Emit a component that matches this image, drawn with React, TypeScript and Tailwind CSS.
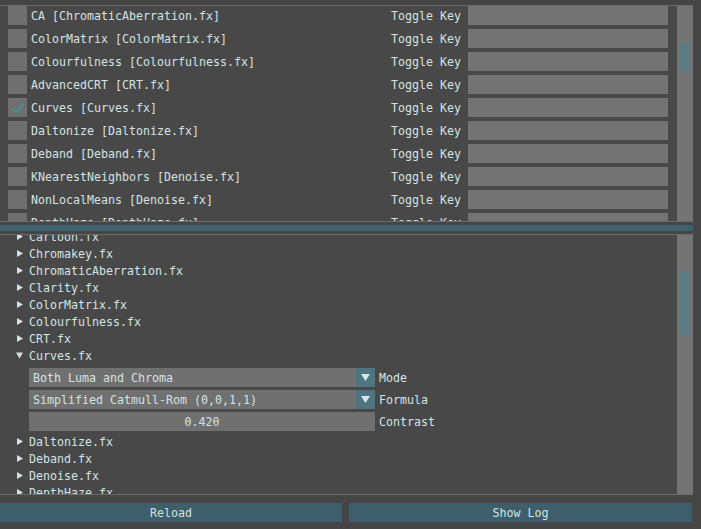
import React from 'react';

const effects = [
  { label: 'CA [ChromaticAberration.fx]' },
  { label: 'ColorMatrix [ColorMatrix.fx]' },
  { label: 'Colourfulness [Colourfulness.fx]' },
  { label: 'AdvancedCRT [CRT.fx]' },
  { label: 'Curves [Curves.fx]', on: true },
  { label: 'Daltonize [Daltonize.fx]' },
  { label: 'Deband [Deband.fx]' },
  { label: 'KNearestNeighbors [Denoise.fx]' },
  { label: 'NonLocalMeans [Denoise.fx]' },
  { label: 'DepthHaze [DepthHaze.fx]' },
];

const filesBefore = [
  'Cartoon.fx',
  'Chromakey.fx',
  'ChromaticAberration.fx',
  'Clarity.fx',
  'ColorMatrix.fx',
  'Colourfulness.fx',
  'CRT.fx',
];

const filesAfter = ['Daltonize.fx', 'Deband.fx', 'Denoise.fx', 'DepthHaze.fx'];

function Arrow({ open }: { open?: boolean }) {
  if (open) {
    return (
      <svg width="7" height="7" viewBox="0 0 7 7" className="ml-[16px] mr-[6px] shrink-0">
        <polygon points="0,0.5 7,0.5 3.5,6.5" fill="#d3e3e3" />
      </svg>
    );
  }
  return (
    <svg width="6" height="7" viewBox="0 0 6 7" className="ml-[17px] mr-[6px] shrink-0">
      <polygon points="0,0 6,3.5 0,7" fill="#d3e3e3" />
    </svg>
  );
}

function TreeItem({ name, open }: { name: string; open?: boolean }) {
  return (
    <div className="flex h-[17px] items-center">
      <Arrow open={open} />
      <span className="pt-[2px]">{name}</span>
    </div>
  );
}

function Combo({ value, label }: { value: string; label: string }) {
  return (
    <div className="flex h-[19px] items-center">
      <div className="ml-[29px] flex h-[19px] w-[346px] items-center bg-[#707070]">
        <span className="flex-1 pl-[4px] pt-[2px]">{value}</span>
        <div className="flex h-[19px] w-[19px] items-center justify-center bg-[#4f7580]">
          <svg width="9" height="7" viewBox="0 0 9 7">
            <polygon points="0,0 9,0 4.5,7" fill="#d6e6ea" />
          </svg>
        </div>
      </div>
      <span className="ml-[4px] pt-[2px]">{label}</span>
    </div>
  );
}

function Scrollbar({ top, height }: { top: number; height: number }) {
  return (
    <div className="relative w-[16px] shrink-0 bg-[#737373]">
      <div
        className="absolute left-[3px] w-[10px] bg-[#5b7b84]"
        style={{ top, height }}
      />
    </div>
  );
}

export default function App() {
  return (
    <div className="h-[529px] w-[701px] overflow-hidden bg-[#454545] pt-[5px] font-['DejaVu_Sans_Mono',monospace] text-[11.63px] leading-none text-[#d3e3e3]">
      {/* technique list */}
      <div className="mr-[8px] flex h-[217px] border-y border-[#6c6c6c] bg-[#484848]">
        <div className="flex flex-1 flex-col gap-[4px] overflow-hidden">
          {effects.map((e) => (
            <div key={e.label} className="flex h-[19px] shrink-0 items-center">
              <div className="ml-[8px] flex h-[19px] w-[19px] shrink-0 items-center justify-center bg-[#6f6f6f]">
                {e.on && (
                  <svg width="14" height="12" viewBox="0 0 14 12">
                    <polyline points="1.5,6.5 5,10 12.5,1.5" fill="none" stroke="#4f8a9a" strokeWidth="2.4" />
                  </svg>
                )}
              </div>
              <span className="ml-[4px] w-[360px] pt-[2px]">{e.label}</span>
              <span className="w-[77px] pt-[2px]">Toggle Key</span>
              <div className="h-[19px] w-[200px] bg-[#737373]" />
            </div>
          ))}
        </div>
        <Scrollbar top={37} height={28} />
      </div>

      {/* splitter */}
      <div className="mr-[8px] mt-[3px] h-[6px] bg-[#3e6370]" />

      {/* effect files */}
      <div className="mr-[8px] mt-[3px] flex h-[261px] border-y border-[#6c6c6c] bg-[#484848]">
        <div className="flex-1 overflow-hidden">
          <div className="mt-[-7px] flex flex-col">
            {filesBefore.map((f) => (
              <TreeItem key={f} name={f} />
            ))}
            <TreeItem name="Curves.fx" open />
            <div className="mt-[4px] flex flex-col gap-[3px]">
              <Combo value="Both Luma and Chroma" label="Mode" />
              <Combo value="Simplified Catmull-Rom (0,0,1,1)" label="Formula" />
              <div className="flex h-[19px] items-center">
                <div className="ml-[29px] flex h-[19px] w-[346px] items-center justify-center bg-[#707070] pt-[2px]">
                  0.420
                </div>
                <span className="ml-[4px] pt-[2px]">Contrast</span>
              </div>
            </div>
            <div className="mt-[2px] flex flex-col">
              {filesAfter.map((f) => (
                <TreeItem key={f} name={f} />
              ))}
            </div>
          </div>
        </div>
        <Scrollbar top={36} height={64} />
      </div>

      {/* buttons */}
      <div className="mt-[8px] flex gap-[7px]">
        <button className="flex h-[19px] w-[342px] items-center justify-center bg-[#3d5e6a] pt-[2px]">Reload</button>
        <button className="flex h-[19px] w-[343px] items-center justify-center bg-[#3d5e6a] pt-[2px]">Show Log</button>
      </div>
    </div>
  );
}
